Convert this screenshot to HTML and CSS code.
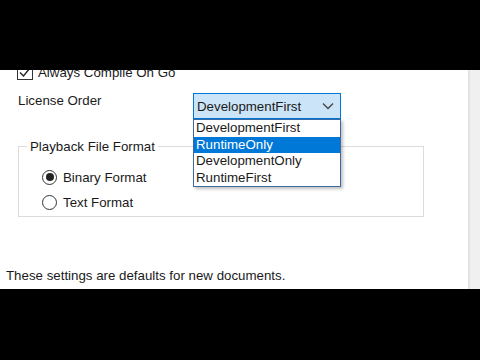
FILE: index.html
```html
<!DOCTYPE html>
<html lang="en">
<head>
  <meta charset="UTF-8" />
  <title>Settings</title>
  <link rel="stylesheet" href="styles.css">
</head>
<body>
  <div class="letterbox"></div>

  <div class="screen">
    <div class="panel">
      <!-- scrolled: top of this row is hidden -->
      <div class="check-row">
        <span class="checkbox">
          <svg width="14" height="14" viewBox="0 0 14 14"><path d="M2 7.5 L5.5 11 L12 3" fill="none" stroke="#222" stroke-width="1.4"/></svg>
        </span>
        <span>Always Compile On Go</span>
      </div>

      <div class="field-row">
        <span class="field-label">License Order</span>
        <div class="combo">
          <div class="combo-box">
            <span>DevelopmentFirst</span>
            <svg class="chevron" width="12" height="8" viewBox="0 0 12 8"><path d="M1 1.5 L6 6.5 L11 1.5" fill="none" stroke="#444" stroke-width="1.3"/></svg>
          </div>
          <ul class="combo-list">
            <li>DevelopmentFirst</li>
            <li class="selected">RuntimeOnly</li>
            <li>DevelopmentOnly</li>
            <li>RuntimeFirst</li>
          </ul>
        </div>
      </div>

      <fieldset class="group">
        <legend>Playback File Format</legend>
        <label class="radio-row"><span class="radio checked"></span>Binary Format</label>
        <label class="radio-row"><span class="radio"></span>Text Format</label>
      </fieldset>

      <p class="note">These settings are defaults for new documents.</p>
    </div>
    <div class="scroll-strip"></div>
  </div>

  <div class="letterbox bottom"></div>
</body>
</html>
```

FILE: styles.css
```css
body {
  margin: 0;
  background: #000;
  font-family: 'Liberation Sans', Arial, sans-serif;
  font-size: 13.3px;
  line-height: 15px;
  color: #1a1a1a;
}

.letterbox {
  height: 70px;
  background: #000;
}

.letterbox.bottom {
  height: 71px;
}

.screen {
  height: 219px;
  display: flex;
  background: #fff;
  overflow: hidden;
}

.panel {
  flex: 1;
  position: relative;
}

.scroll-strip {
  width: 10px;
  background: #f0f0f0;
  border-left: 2px solid #e3e3e3;
}

.check-row {
  display: flex;
  align-items: center;
  gap: 5px;
  margin: -6px 0 0 17px;
  height: 16px;
}

.checkbox {
  width: 14px;
  height: 14px;
  border: 1px solid #333;
  display: flex;
}

.field-row {
  display: flex;
  align-items: flex-start;
  margin: 13px 0 0 18px;
  height: 26px;
}

.field-label {
  width: 175px;
}

.combo {
  position: relative;
}

.combo-box {
  width: 148px;
  height: 26px;
  box-sizing: border-box;
  border: 1px solid #0078d7;
  background: #cce4f7;
  display: flex;
  align-items: center;
  justify-content: space-between;
  padding: 0 5px 0 3px;
}

.chevron {
  margin-right: 1px;
}

.combo-list {
  position: absolute;
  left: 0;
  top: 26px;
  width: 148px;
  box-sizing: border-box;
  margin: 0;
  padding: 0;
  list-style: none;
  background: #fff;
  border: 1px solid #3c6aa3;
  box-shadow: 2px 2px 3px rgba(0, 0, 0, 0.25);
  z-index: 2;
}

.combo-list li {
  height: 16.5px;
  line-height: 16.5px;
  padding-left: 2px;
}

.combo-list li.selected {
  background: #0078d7;
  color: #fff;
}

.group {
  margin: 20px 0 0 18px;
  width: 406px;
  height: 78px;
  box-sizing: border-box;
  border: 1px solid #dcdcdc;
  padding: 15px 0 0 23px;
}

.group legend {
  padding: 0 3px;
  margin-left: -15px;
}

.radio-row {
  display: flex;
  align-items: center;
  gap: 6px;
  height: 16px;
  margin-bottom: 9px;
}

.radio {
  width: 13px;
  height: 13px;
  border: 1px solid #333;
  border-radius: 50%;
  display: flex;
  align-items: center;
  justify-content: center;
}

.radio.checked::after {
  content: "";
  width: 8px;
  height: 8px;
  border-radius: 50%;
  background: #222;
}

.note {
  margin: 51px 0 0 6px;
}
```
